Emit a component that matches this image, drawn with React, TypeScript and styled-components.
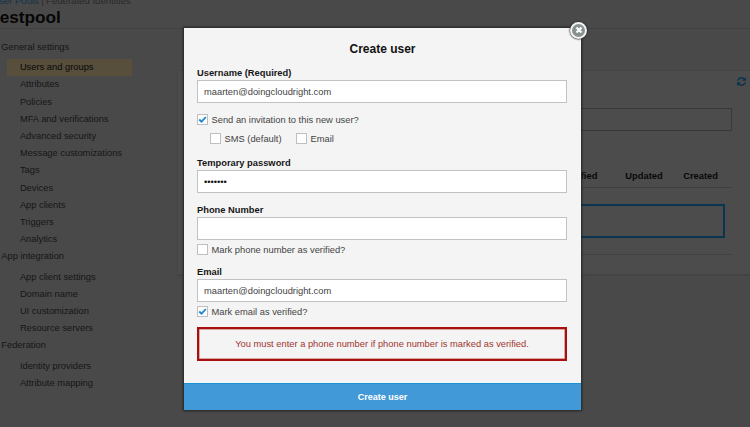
import React from "react";
import styled, { createGlobalStyle, css } from "styled-components";

const GlobalStyle = createGlobalStyle`
  * { box-sizing: border-box; }
  body {
    margin: 0;
    background: #494949;
    font-family: "Liberation Sans", Arial, sans-serif;
    font-size: 9.33px;
    overflow: hidden;
  }
`;

const Page = styled.div`
  position: relative;
  width: 750px;
  height: 427px;
  overflow: hidden;
  background: #494949;
  color: #161616;
`;

const Header = styled.header`
  height: 29px;
  border-bottom: 1px solid #424242;
`;

const Breadcrumb = styled.div`
  height: 6px;
  margin-left: -8px;
  display: flex;
  align-items: flex-end;
  gap: 2.3px;
  line-height: 11px;
  font-size: 9.6px;
  white-space: nowrap;
  color: #2a2a2a;
`;

const CrumbLink = styled.a`
  color: #12334a;
`;

const PoolTitle = styled.h1`
  margin: 0 0 0 -6px;
  font-size: 17.2px;
  line-height: 22px;
  font-weight: 700;
  color: #060606;
`;

const Columns = styled.div`
  display: flex;
  height: 398px;
`;

const Sidebar = styled.nav`
  flex: none;
  width: 177px;
  padding-top: 9.9px;
`;

const SectionTitle = styled.div`
  height: 17.2px;
  margin-bottom: 3.2px;
  padding-left: 1.3px;
  line-height: 17.8px;
`;

const NavItem = styled.a<{ $active?: boolean }>`
  display: block;
  width: 125.5px;
  height: 17.2px;
  margin-left: 6.7px;
  padding-left: 13.2px;
  line-height: 17.8px;
  ${(p) => p.$active && css`
    background: #574e3c;
    color: #080808;
  `}
`;

const Content = styled.main`
  flex: 1;
  display: flex;
  flex-direction: column;
  padding-top: 41px;
`;

const Panel = styled.section`
  height: 206px;
  border: 1px solid #454545;
  border-right: 0;
  border-bottom: 2px solid #434545;
  background: #4c4c4c;
  padding: 6px 4px 0 18px;
`;

const Toolbar = styled.div`
  display: flex;
  justify-content: flex-end;
  height: 31px;
`;

const SearchField = styled.div`
  height: 23px;
  margin-right: 14px;
  border: 1px solid #383838;
`;

const TableHead = styled.div`
  display: flex;
  justify-content: flex-end;
  gap: 20.6px;
  height: 57px;
  margin-right: 14px;
  padding: 39px 14px 0 0;
  border-bottom: 1px solid #404040;
  font-weight: 700;
  line-height: 12px;
  color: #080808;
  white-space: nowrap;
`;

const HeadCell = styled.span<{ $gap?: number }>`
  margin-right: ${(p) => p.$gap ?? 0}px;
`;

const Notice = styled.div`
  height: 34px;
  margin: 16px 21px 0 0;
  border: 2px solid #0a3450;
`;

const Rule = styled.div`
  height: 17px;
  margin-right: 14px;
  border-bottom: 1px solid #414141;
`;

const Dialog = styled.form`
  position: absolute;
  left: 184px;
  top: 28px;
  width: 397px;
  height: 381.6px;
  display: flex;
  flex-direction: column;
  background: #f4f4f4;
  color: #444;
  box-shadow: 0 0 2px 1px #242424;
`;

const DialogTitle = styled.h2`
  margin: 0;
  padding-top: 13px;
  height: 37px;
  font-size: 12px;
  line-height: 17px;
  font-weight: 700;
  text-align: center;
  color: #111;
`;

const Fields = styled.div`
  flex: 1;
  padding: 0 14px 0 13px;
`;

const Label = styled.label<{ $top?: number }>`
  display: block;
  height: 15px;
  margin-top: ${(p) => p.$top ?? 0}px;
  line-height: 17px;
  font-weight: 700;
  color: #161616;
`;

const Input = styled.input`
  display: block;
  width: 100%;
  height: 23px;
  padding: 0 6px;
  border: 1px solid #c0c3c3;
  border-radius: 0;
  outline: 0;
  background: #fff;
  color: #444;
  font: inherit;
`;

const PasswordInput = styled(Input)`
  color: #111;
`;

const Checks = styled.div<{ $top: number; $indent?: number }>`
  display: flex;
  gap: 14.5px;
  margin-top: ${(p) => p.$top}px;
  margin-left: ${(p) => p.$indent ?? 0}px;
`;

const CheckLabel = styled.span`
  display: flex;
  gap: 3.5px;
  height: 11px;
  line-height: 12px;
  white-space: nowrap;
`;

const Box = styled.span`
  width: 11px;
  height: 11px;
  display: flex;
  border: 1px solid #bcc0c0;
  background: #fff;
`;

const ErrorBox = styled.div`
  display: flex;
  align-items: center;
  justify-content: center;
  height: 34px;
  margin-top: 10px;
  border: 2px solid #a90f0c;
  box-shadow: inset 0 0 0 0.5px #b85a57;
  color: #a13532;
`;

const Submit = styled.button`
  height: 26.6px;
  padding: 0;
  border: 0;
  border-top: 1px solid #1b93d6;
  background: #4299d8;
  color: #fff;
  font: inherit;
  font-size: 9px;
  font-weight: 700;
`;

const CloseButton = styled.button`
  position: absolute;
  right: -6px;
  top: -6.5px;
  width: 17px;
  height: 17px;
  display: flex;
  align-items: center;
  justify-content: center;
  padding: 0;
  border: 2px solid #f4f4f4;
  border-radius: 50%;
  background: #879191;
  box-shadow: 0 0 1.5px 0.5px #222;
`;

const RefreshIcon = () => (
  <svg width="9" height="9" viewBox="0 0 1536 1536" fill="#0b3350">
    <path d="M1511 928q0 5-1 7-64 268-268 434.500T764 1536q-146 0-282.500-55T238 1324l-129 129q-19 19-45 19t-45-19-19-45V960q0-26 19-45t45-19h448q26 0 45 19t19 45-19 45l-137 137q71 66 161 102t187 36q134 0 250-65t186-179q11-17 53-117 8-23 30-23h192q13 0 22.500 9.500t9.500 22.500zm25-800v448q0 26-19 45t-45 19h-448q-26 0-45-19t-19-45 19-45l138-138Q969 256 768 256q-134 0-250 65T332 500q-11 17-53 117-8 23-30 23H50q-13 0-22.500-9.500T18 608v-7q65-268 270-434.500T768 0q146 0 284 55.500T1297 212l130-129q19-19 45-19t45 19 19 45z" />
  </svg>
);

const Tick = () => (
  <svg width="9" height="9" viewBox="0 0 9 9" fill="none" stroke="#1b87d0" strokeWidth="1.8">
    <path d="M1.2 4.5 3.5 6.7 7.9 2" />
  </svg>
);

const sections = [
  {
    title: "General settings",
    items: [
      "Users and groups", "Attributes", "Policies", "MFA and verifications",
      "Advanced security", "Message customizations", "Tags", "Devices",
      "App clients", "Triggers", "Analytics",
    ],
  },
  {
    title: "App integration",
    items: ["App client settings", "Domain name", "UI customization", "Resource servers"],
  },
  { title: "Federation", items: ["Identity providers", "Attribute mapping"] },
];

function Check({ label, checked }: { label: string; checked?: boolean }) {
  return (
    <CheckLabel>
      <Box>{checked && <Tick />}</Box>
      {label}
    </CheckLabel>
  );
}

export default function App() {
  return (
    <Page>
      <GlobalStyle />
      <Header>
        <Breadcrumb>
          <CrumbLink>User Pools</CrumbLink>
          <span>|</span>
          <span>Federated Identities</span>
        </Breadcrumb>
        <PoolTitle>testpool</PoolTitle>
      </Header>
      <Columns>
        <Sidebar>
          {sections.map((section) => (
            <React.Fragment key={section.title}>
              <SectionTitle>{section.title}</SectionTitle>
              {section.items.map((item) => (
                <NavItem key={item} $active={item === "Users and groups"}>{item}</NavItem>
              ))}
            </React.Fragment>
          ))}
        </Sidebar>
        <Content>
          <Panel>
            <Toolbar><RefreshIcon /></Toolbar>
            <SearchField />
            <TableHead>
              <HeadCell $gap={7.4}>Email verified</HeadCell>
              <HeadCell>Updated</HeadCell>
              <HeadCell>Created</HeadCell>
            </TableHead>
            <Notice />
            <Rule />
          </Panel>
        </Content>
      </Columns>
      <Dialog>
        <CloseButton type="button" aria-label="Close">
          <svg width="8" height="8" viewBox="0 0 8 8" stroke="#fff" strokeWidth="2.2">
            <path d="M1.5 1.5 6.5 6.5M6.5 1.5 1.5 6.5" />
          </svg>
        </CloseButton>
        <DialogTitle>Create user</DialogTitle>
        <Fields>
          <Label>Username (Required)</Label>
          <Input defaultValue="maarten@doingcloudright.com" />
          <Checks $top={11}><Check label="Send an invitation to this new user?" checked /></Checks>
          <Checks $top={8} $indent={13}>
            <Check label="SMS (default)" />
            <Check label="Email" />
          </Checks>
          <Label $top={11}>Temporary password</Label>
          <PasswordInput type="password" defaultValue="secret7" />
          <Label $top={9}>Phone Number</Label>
          <Input />
          <Checks $top={4}><Check label="Mark phone number as verified?" /></Checks>
          <Label $top={9}>Email</Label>
          <Input defaultValue="maarten@doingcloudright.com" />
          <Checks $top={4}><Check label="Mark email as verified?" checked /></Checks>
          <ErrorBox>You must enter a phone number if phone number is marked as verified.</ErrorBox>
        </Fields>
        <Submit type="button">Create user</Submit>
      </Dialog>
    </Page>
  );
}
